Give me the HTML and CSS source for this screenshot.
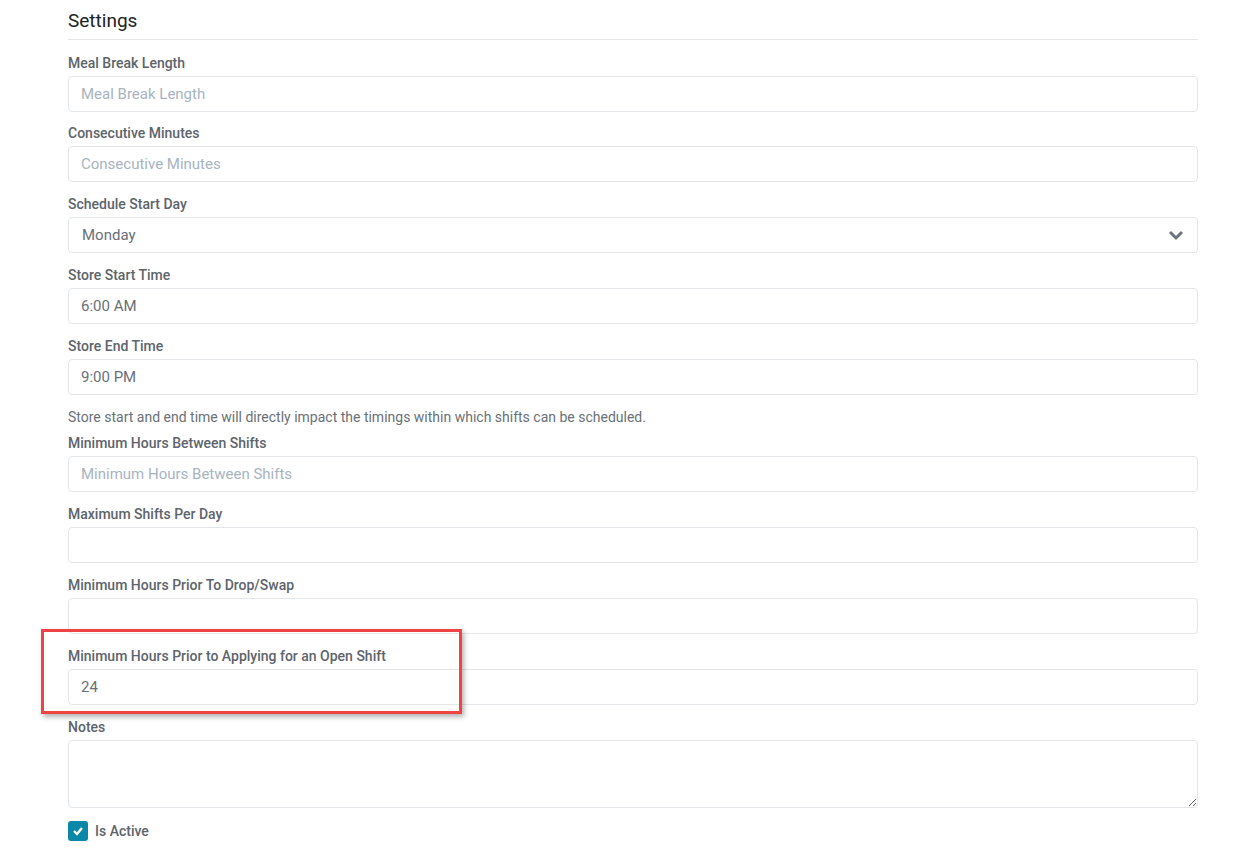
FILE: index.html
```html
<!DOCTYPE html>
<html lang="en">
<head>
    <meta charset="UTF-8">
    <title>Settings</title>
    <link rel="stylesheet" href="styles.css">
</head>
<body>
    <div class="settings">
        <h2>Settings</h2>

        <div class="field">
            <label>Meal Break Length</label>
            <input type="text" placeholder="Meal Break Length">
        </div>
        <div class="field">
            <label>Consecutive Minutes</label>
            <input type="text" placeholder="Consecutive Minutes">
        </div>
        <div class="field">
            <label>Schedule Start Day</label>
            <div class="select">
                <span>Monday</span>
                <svg width="16" height="12" viewBox="0 0 16 12"><path d="M2 3 L8 9 L14 3" fill="none" stroke="#6c757d" stroke-width="3"/></svg>
            </div>
        </div>
        <div class="field">
            <label>Store Start Time</label>
            <input type="text" value="6:00 AM">
        </div>
        <div class="field">
            <label>Store End Time</label>
            <input type="text" value="9:00 PM">
        </div>
        <p class="help">Store start and end time will directly impact the timings within which shifts can be scheduled.</p>
        <div class="field">
            <label>Minimum Hours Between Shifts</label>
            <input type="text" placeholder="Minimum Hours Between Shifts">
        </div>
        <div class="field">
            <label>Maximum Shifts Per Day</label>
            <input type="text">
        </div>
        <div class="field">
            <label>Minimum Hours Prior To Drop/Swap</label>
            <input type="text">
        </div>
        <div class="field highlighted">
            <label>Minimum Hours Prior to Applying for an Open Shift</label>
            <input type="text" value="24">
            <div class="callout"></div>
        </div>
        <div class="field">
            <label>Notes</label>
            <textarea></textarea>
        </div>
        <div class="check">
            <span class="box">
                <svg width="12" height="10" viewBox="0 0 12 10"><path d="M2 5 L5 8 L10 2" fill="none" stroke="#fff" stroke-width="2.4"/></svg>
            </span>
            <span>Is Active</span>
        </div>
    </div>
</body>
</html>
```

FILE: styles.css
```css
body {
    margin: 0;
    font-family: Roboto, "Liberation Sans", Arial, sans-serif;
    background-color: #fff;
    color: #495057;
}
.settings {
    width: 1130px;
    margin-left: 68px;
}
h2 {
    font-size: 19px;
    font-weight: 400;
    color: #222;
    margin: 0 0 13px;
    padding-top: 10px;
    line-height: 22px;
    padding-bottom: 7px;
    border-bottom: 1px solid #e6e6e6;
}
.field {
    margin-bottom: 12px;
    position: relative;
}
.field:first-of-type {
    margin-bottom: 11px;
}
label {
    display: block;
    font-size: 14px;
    font-weight: 500;
    color: #5d646b;
    line-height: 20px;
    margin-bottom: 3px;
}
input, textarea, .select {
    display: block;
    box-sizing: border-box;
    width: 100%;
    height: 36px;
    padding: 0 12px;
    font-family: inherit;
    font-size: 15px;
    color: #6a7077;
    border: 1px solid #e3e6e9;
    border-radius: 4px;
    background: #fff;
    outline: none;
}
input::placeholder {
    color: #a7b4c0;
}
.select {
    display: flex;
    align-items: center;
    justify-content: space-between;
    padding-left: 13px;
    padding-right: 13px;
}
textarea {
    height: 68px;
    padding: 8px 12px;
}
.help {
    font-size: 14px;
    color: #6a7077;
    margin: 9px 0 6px;
    line-height: 20px;
}
.callout {
    position: absolute;
    left: -27px;
    top: -17px;
    box-sizing: border-box;
    width: 421px;
    height: 85px;
    border: 3px solid #ef4344;
    box-shadow: 2px 3px 5px rgba(0,0,0,0.3);
}
.check {
    display: flex;
    align-items: center;
    gap: 7px;
    margin-top: 13px;
    font-size: 14px;
    font-weight: 500;
    color: #5d646b;
}
.box {
    width: 20px;
    height: 20px;
    border-radius: 3px;
    background-color: #0b87a8;
    display: flex;
    align-items: center;
    justify-content: center;
}
```
